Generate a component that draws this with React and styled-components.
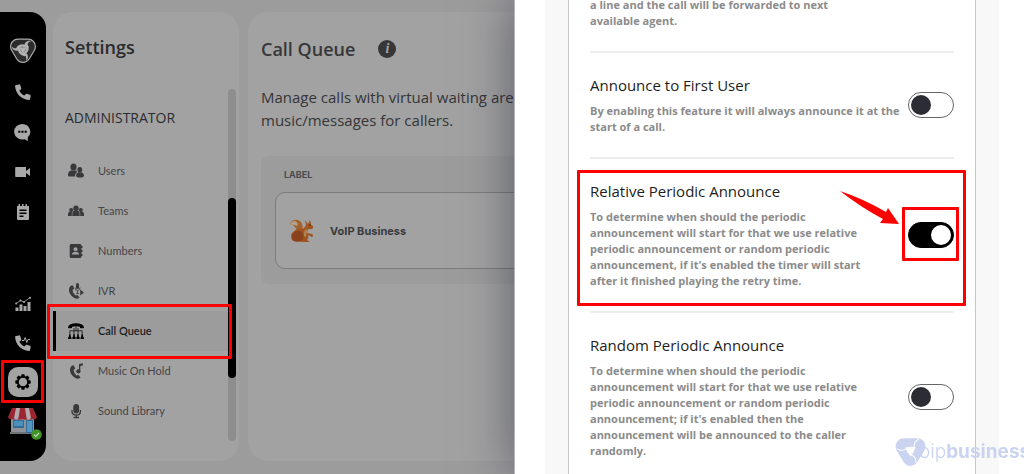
import React from 'react';
import styled, { createGlobalStyle, css } from 'styled-components';

const GlobalStyle = createGlobalStyle`
  *, *::before, *::after { box-sizing: border-box; }
  body {
    margin: 0;
    background: #9c9c9c;
    color: #2b2b2e;
    font-family: "Open Sans", "Noto Sans", sans-serif;
    overflow: hidden;
  }
  button { font: inherit; color: inherit; padding: 0; border: 0; background: none; cursor: pointer; }
  h1, h2, h3, p, ul { margin: 0; padding: 0; }
  ul { list-style: none; }
`;

const Page = styled.div`
  display: flex;
  gap: 7px;
  height: 100vh;
  padding: 12px 0 13px;
`;

const Rail = styled.nav`
  flex: none;
  width: 46px;
  display: flex;
  flex-direction: column;
  justify-content: space-between;
  padding: 18px 0 21px;
  background: #000;
  border-radius: 0 16px 16px 0;
`;

const RailGroup = styled.div`
  display: flex;
  flex-direction: column;
`;

const RailItem = styled.button`
  position: relative;
  display: flex;
  align-items: center;
  justify-content: center;
  width: 45px;
  height: ${(p) => p.$height}px;
  color: #a9a9a9;
  svg { display: block; }
`;

const GearTile = styled.span`
  display: flex;
  align-items: center;
  justify-content: center;
  width: 30px;
  height: 30px;
  border-radius: 10px;
  background: #a3a3a3;
  color: #000;
`;

const Callout = styled.span`
  position: absolute;
  inset: ${(p) => p.$inset};
  border: 3px solid #fe0000;
  border-radius: 1px;
  pointer-events: none;
  z-index: 2;
`;

const StatusBadge = styled.span`
  position: absolute;
  right: 3px;
  bottom: 0;
  width: 11px;
  height: 11px;
`;

const Panel = styled.section`
  background: #a2a2a2;
  border-radius: 20px;
`;

const SettingsPanel = styled(Panel)`
  flex: none;
  width: 186px;
  display: flex;
  flex-direction: column;
  padding: 23px 3px 20px 0;
`;

const PanelTitle = styled.h1`
  font-size: 18px;
  line-height: 24px;
  font-weight: 600;
`;

const SettingsTitle = styled(PanelTitle)`
  padding-left: 12px;
`;

const ScrollArea = styled.div`
  flex: 1;
  display: flex;
  margin-top: 30px;
`;

const MenuColumn = styled.div`
  flex: 1;
`;

const GroupTitle = styled.h2`
  padding: 19px 0 23px 12px;
  font-size: 14px;
  line-height: 20px;
  font-weight: 400;
`;

const MenuItem = styled.li`
  position: relative;
`;

const MenuButton = styled.button`
  display: flex;
  align-items: center;
  gap: 14px;
  width: 100%;
  height: 40px;
  padding-left: ${(p) => (p.$active ? 12 : 15)}px;
  font-family: Lato, "Open Sans", sans-serif;
  font-size: 11px;
  line-height: 16px;
  text-align: left;
  color: #444447;
  svg { flex: none; display: block; color: #39393b; }
  ${(p) => p.$active && css`
    background: #9c9c9c;
    border-left: 3px solid #000;
    color: #1c1c1f;
    font-weight: 600;
    svg { color: #000; }
  `}
`;

const ScrollTrack = styled.div`
  flex: none;
  width: 8px;
  padding-top: 109px;
  border-radius: 4px;
  background: #8e8e8e;
`;

const ScrollThumb = styled.div`
  height: 180px;
  border-radius: 4px;
  background: #000;
`;

const Content = styled(Panel)`
  flex: 1;
  min-width: 0;
  margin-left: 2px;
  padding: 25px 13px 0;
  border-radius: 20px 0 0 20px;
  white-space: nowrap;
`;

const ContentHead = styled.header`
  display: flex;
  align-items: center;
  gap: 23px;
  color: #37373a;
`;

const InfoButton = styled.button`
  width: 18px;
  height: 18px;
  border-radius: 50%;
  background: #37373a;
  color: #a2a2a2;
  font: italic 700 14px/18px "Liberation Serif", serif;
  text-align: center;
`;

const Intro = styled.p`
  margin-top: 25px;
  font-size: 15px;
  line-height: 23px;
  color: #353538;
`;

const QueueCard = styled.div`
  margin-top: 24px;
  padding: 10px 14px 15px;
  border-radius: 8px;
  background: #9c9c9c;
`;

const ColumnLabel = styled.div`
  padding-left: 9px;
  font: 700 9px/18px Inter, sans-serif;
  color: #4b4b4e;
`;

const QueueRow = styled.div`
  display: flex;
  align-items: center;
  gap: 16px;
  height: 77px;
  margin-top: 8px;
  padding-left: 13px;
  border: 1px solid #7c7c7e;
  border-radius: 10px;
  background: #a2a2a2;
  font: 700 11px/16px Inter, sans-serif;
  color: #3a3a3d;
`;

const Drawer = styled.aside`
  position: fixed;
  inset: 0 0 0 auto;
  width: calc(50% - 2px);
  overflow: hidden;
  padding: 0 25px 0 30px;
  background: #fff;
  border-left: 1px solid #b4b4b8;
  box-shadow: 0 0 48px rgba(20, 22, 50, 0.5);
`;

const DrawerBody = styled.div`
  height: 100%;
  padding: 0 23px;
  background: #f8f8f8;
`;

const OptionCard = styled.div`
  display: flow-root;
  height: 100%;
  padding: 0 21px;
  background: #fff;
  border: solid #c6c6c6;
  border-width: 0 1px;
`;

const Option = styled.div`
  position: relative;
  display: flex;
  align-items: center;
  justify-content: space-between;
  padding: 22px 0;
  border-bottom: 2px solid #ededed;
`;

const ScrolledOption = styled(Option)`
  margin-top: -3px;
  padding-top: 0;
`;

const OptionText = styled.div`
  flex: 1;
  min-width: 0;
`;

const OptionTitle = styled.label`
  display: block;
  margin-bottom: 8px;
  font-size: 15px;
  line-height: 20px;
  color: #1e1e20;
`;

const OptionNote = styled.p`
  font-size: 11px;
  line-height: 16px;
  font-weight: 700;
  color: #8b8b8b;
  white-space: pre;
`;

const SwitchWrap = styled.span`
  position: relative;
  flex: none;
  display: flex;
`;

const Switch = styled.input`
  appearance: none;
  display: flex;
  align-items: center;
  width: 46px;
  height: 26px;
  margin: 0;
  padding: 0 2px;
  border: 1px solid #66666a;
  border-radius: 13px;
  background: #fff;
  cursor: pointer;
  &::before {
    content: "";
    width: 20px;
    height: 20px;
    border-radius: 50%;
    background: #2c2c35;
  }
  &:checked {
    justify-content: flex-end;
    background: #000;
    border-color: #000;
  }
  &:checked::before { background: #fff; }
`;

const Arrow = styled.svg`
  position: absolute;
  right: 54px;
  top: 32px;
`;

const Watermark = styled.div`
  position: absolute;
  left: 380px;
  bottom: 7px;
  display: flex;
  align-items: center;
  color: #cad4f0;
  white-space: nowrap;
  pointer-events: none;
`;

const WatermarkText = styled.span`
  margin-left: -7px;
  font: 300 19px/24px Inter, sans-serif;
  strong { font-weight: 700; }
`;

const Glyph = ({ w = 16, h = w, box = '0 0 16 16', children }) => (
  <svg width={w} height={h} viewBox={box} fill="currentColor" aria-hidden="true">{children}</svg>
);

const HANDSET = 'M3.8.4 1 .9C.3 1 0 1.500.1 2.200.8 9.800 6.200 15.200 13.800 15.900 14.500 16 15 15.700 15.100 15L15.700 12.200C15.800 11.500 15.500 11.100 14.900 10.800L11.900 9.800C11.400 9.600 10.900 9.800 10.600 10.200L9.300 11.600C7.100 10.500 5.500 8.900 4.400 6.700L5.800 5.400C6.200 5.100 6.400 4.600 6.200 4.100L5.200 1.100C5 .5 4.500.2 3.800.4Z';
const TURNS = [0, 120, 240];

const Brand = () => (
  <Glyph w={28} h={28} box="0 0 28 27">
    <path d="M9 9H19L14 17.500Z" fill="#a9a9a9" stroke="#a9a9a9" strokeWidth="16" strokeLinejoin="round" />
    <path d="M9 9H19L14 17.500Z" fill="#2c2c2c" stroke="#2c2c2c" strokeWidth="13.600" strokeLinejoin="round" />
    <path d="M10 9.700h8L14 16.800Z" fill="#b2b2b2" />
    {TURNS.map((a) => (
      <g key={a} transform={`rotate(${a} 14 12)`}>
        <path d="M19 12Q18 6.800 13 6.800 8.500 7.300 7 11 4.500 11 2.500 9 4 13.800 9 13.300 9.500 9.800 13 9.300 17 9.200 19 12Z" fill="#b2b2b2" />
      </g>
    ))}
  </Glyph>
);

const Phone = () => <Glyph><path d={HANDSET} /></Glyph>;

const Chat = () => (
  <Glyph w={17}>
    <path fillRule="evenodd" d="M8 0a7.700 7.300 0 1 0 2 14.300L13 16v-3.500A7.600 7.300 0 0 0 8 0ZM4 6.300h2v2H4Zm3 0h2v2H7Zm3 0h2v2h-2Z" />
  </Glyph>
);

const Video = () => <Glyph><path d="M1 3h10v4l4-3v8l-4-3v4H1q-.8 0-.8-.8V3.800Q.2 3 1 3Z" /></Glyph>;

const Notes = () => (
  <Glyph>
    <path fillRule="evenodd" d="M2 2h1.500V0H5v2h2V0h1.500v2h2V0H12v2h2v13q0 1-1 1H3q-1 0-1-1ZM4.500 5.500V7h7V5.500Zm0 3V10h7V8.500Zm0 3V13h4v-1.500Z" />
  </Glyph>
);

const Chart = () => (
  <Glyph>
    <path d="M.5 11.500h3V15h-3Zm4-3h3V15h-3Zm4 1.500h3v5h-3Zm4-4h3v9h-3Z" />
    <path d="m1 7.500 4.500-3L9 6l6-4.500" fill="none" stroke="currentColor" strokeWidth=".8" />
    <circle cx="1.200" cy="7.500" r="1" /><circle cx="5.500" cy="4.500" r="1" /><circle cx="9" cy="6" r="1" /><circle cx="15" cy="1.800" r="1" />
  </Glyph>
);

const PhonePulse = () => (
  <Glyph>
    <path d={HANDSET} />
    <path d="M7 5.500h2l1.200-3 1.600 5L13 4.500h2" fill="none" stroke="currentColor" />
  </Glyph>
);

const Gear = () => (
  <Glyph w={16}>
    {[0, 45, 90, 135, 180, 225, 270, 315].map((a) => (
      <rect key={a} x="6.300" y="0.300" width="3.400" height="3" rx=".7" transform={`rotate(${a} 8 8)`} />
    ))}
    <circle cx="8" cy="8" r="5.200" fill="none" stroke="currentColor" strokeWidth="1.900" />
  </Glyph>
);

const Store = () => (
  <Glyph w={29} h={26} box="0 0 29 26">
    <path d="M3 8h23v17H3Z" fill="#8f9296" />
    <path d="M2 24h25v2H2Z" fill="#6d7478" />
    <path d="M5 12h11v8H5Z" fill="#356c94" /><path d="M6 13h9v5H6Z" fill="#4c91bd" />
    <path d="M18 12h7v13h-7Z" fill="#326d98" /><path d="M19 13h5v11h-5Z" fill="#5295bd" />
    <path d="M4 0h21l4 9q-1 3-4 2-3 1-5 0-3 1-5.500 0-3 1-5.500 0-2 1-5 0-3 1-4-2Z" fill="#9b2532" />
    <path d="m8 0-2 10q2 3 4.500 0L12 0Zm9 0 1.500 10q2 3 4.500 0L21 0Z" fill="#b4aaad" />
  </Glyph>
);

const Check = () => (
  <Glyph w={11} box="0 0 11 11">
    <circle cx="5.500" cy="5.500" r="5.300" fill="#3f9425" />
    <path d="m3 5.600 1.800 1.800L8 4" fill="none" stroke="#c6d9c0" strokeWidth="1.200" />
  </Glyph>
);

const Users = () => (
  <Glyph>
    <ellipse cx="5.500" cy="4" rx="3.100" ry="3.600" /><path d="M0 12q0-4 3-4.500h5q1 .5 1 2Q7 10 7 13.500H1Q0 13.500 0 12Z" />
    <ellipse cx="11.800" cy="6.800" rx="2.400" ry="2.700" /><path d="M8 12.500Q8 10 10.500 9.300h2.800Q16 10 16 12.500q0 2-4 2t-4-2Z" />
  </Glyph>
);

const Teams = () => (
  <Glyph>
    <circle cx="8" cy="5.300" r="2.700" /><circle cx="3.200" cy="7" r="2" /><circle cx="12.800" cy="7" r="2" />
    <path d="M4.300 13V11q0-3.500 2.700-3.500h2q2.700 0 2.700 3.500v2ZM0 13v-2q0-2.500 2-2.500h2Q3.800 10 3.800 13Zm16 0v-2q0-2.500-2-2.500h-2q.2 1.500.2 4.500Z" />
  </Glyph>
);

const Book = () => (
  <Glyph>
    <path fillRule="evenodd" d="M3 1h9q1.500 0 1.500 1.500v11Q13.500 15 12 15H3q-1.300 0-1.300-1.500v-11Q1.700 1 3 1Zm4.500 3.200a2 2 0 1 0 .1 0ZM4 11.500h7q0-2.600-2.500-2.600h-2Q4 8.900 4 11.500Z" />
    <path d="M13 3h1.500v2H13Zm0 4h1.500v2H13Zm0 4h1.500v2H13Z" />
  </Glyph>
);

const RoundHandset = () => (
  <path d="M3 2.500C0 5 .5 10 4 13.200 6.500 15.800 10 16.500 11.500 14.500L9.600 11.900 7.500 12.500Q4.800 10.300 4.500 7.300L6 5.500 5 2.500Z" />
);

const Ivr = () => (
  <Glyph>
    <RoundHandset />
    <rect x="8" y="0" width="3" height="6" rx="1.500" />
    <path d="M7 4.500q0 3 2.500 3t2.500-3M9.500 7.500v3M8 10.500h3" fill="none" stroke="currentColor" strokeWidth=".8" />
    <path d="m12.200 6.500 3.800 3-3.800 3Z" />
  </Glyph>
);

const MusicHold = () => (
  <Glyph>
    <g transform="translate(1 0)"><RoundHandset /></g>
    <path d="M11 8V1l3.800-.8v2.300l-2.500.6V8.500" /><circle cx="10.400" cy="8.300" r="2.100" />
  </Glyph>
);

const Mic = () => (
  <Glyph>
    <rect x="5.300" y="1" width="5.800" height="9.500" rx="2.900" />
    <path d="M4 7v1.500q0 3.700 4.200 3.700t4.200-3.700V7M8.200 12v2.500M5.500 14.500h5.500" fill="none" stroke="currentColor" strokeWidth="1.300" />
  </Glyph>
);

const QueueTree = () => (
  <Glyph>
    <path d="M0 4Q1 .2 8 .2T16 4q0 1.200-1 1.200h-2q-1.200 0-1.200-1.500Q8 2.700 4.200 3.700q0 1.500-1.200 1.500H1Q0 5.200 0 4Z" />
    <path d="M8 3v5M1.800 12V7.800h12.400V12M6 5v7M10 5v7" fill="none" stroke="currentColor" strokeWidth=".7" />
    {[1.8, 6, 10, 14.2].map((x) => (
      <path key={x} d={`M${x - 0.8} 11.500h1.600v2l.8 .8V16h-3.200v-1.700l.8-.8Z`} />
    ))}
  </Glyph>
);

const Squirrel = () => (
  <Glyph w={25} h={24} box="0 0 25 24">
    <path d="M3 2Q8-1 12 3q3 4 1 9L7 16Q9 11 6 8 4 5 1 6 1 3 3 2Z" fill="#a2622d" />
    <path d="M1 6Q2 2 6 2q4 2 2 5-3-2-7-1Z" fill="#b3a189" />
    <path d="M16 1l3 4 2-4q1 3 1 5 3 1 2 3-1 2-5 1l-1 4 5 1q2 2 0 3l-4-2q1 4-1 5l3 2h-7L4 22Q0 17 4 13q4-4 9-3 3-1 4-4Z" fill="#a0541f" />
    <path d="M4 14q4-4 9-1 3 4 0 8-4 3-8 1-4-4-1-8Z" fill="#8a421c" />
    <path d="M17 10q-3 3-2 7l2 1 1-7Z" fill="#b18352" />
    <circle cx="21" cy="6" r=".7" fill="#332016" />
  </Glyph>
);

const WatermarkLogo = () => (
  <Glyph w={31} h={30} box="0 0 28 27">
    <path d="M8 8.500H20L14 18.500Z" stroke="currentColor" strokeWidth="15" strokeLinejoin="round" />
    <path d="M9.500 9.400h9L14 17.200Z" fill="#fff" />
    {TURNS.map((a) => (
      <path key={a} d="M18.500 9.800Q13 8 9.500 10.800 6 13.500 1.500 10.500" fill="none" stroke="#fff" strokeWidth=".9" transform={`rotate(${a} 14 12)`} />
    ))}
  </Glyph>
);

const MENU = [
  { name: 'Users', icon: Users },
  { name: 'Teams', icon: Teams },
  { name: 'Numbers', icon: Book },
  { name: 'IVR', icon: Ivr },
  { name: 'Call Queue', icon: QueueTree, active: true },
  { name: 'Music On Hold', icon: MusicHold },
  { name: 'Sound Library', icon: Mic },
];

const RAIL_TOP = [
  { name: 'Phone', icon: Phone },
  { name: 'Chat', icon: Chat },
  { name: 'Video', icon: Video },
  { name: 'Notes', icon: Notes },
];

const RAIL_BOTTOM = [
  { name: 'Analytics', icon: Chart },
  { name: 'Call activity', icon: PhonePulse },
];

export default function App() {
  return (
    <>
      <GlobalStyle />
      <Page>
        <Rail>
          <RailGroup>
            <RailItem $height={42} aria-label="Home"><Brand /></RailItem>
            {RAIL_TOP.map(({ name, icon: Icon }) => (
              <RailItem key={name} $height={40} aria-label={name}><Icon /></RailItem>
            ))}
          </RailGroup>
          <RailGroup>
            {RAIL_BOTTOM.map(({ name, icon: Icon }) => (
              <RailItem key={name} $height={39} aria-label={name}><Icon /></RailItem>
            ))}
            <RailItem $height={39} aria-label="Settings">
              <GearTile><Gear /></GearTile>
              <Callout $inset="-2px 1px" />
            </RailItem>
            <RailItem $height={39} aria-label="Account">
              <Store />
              <StatusBadge><Check /></StatusBadge>
            </RailItem>
          </RailGroup>
        </Rail>

        <SettingsPanel>
          <SettingsTitle>Settings</SettingsTitle>
          <ScrollArea>
            <MenuColumn>
              <GroupTitle>ADMINISTRATOR</GroupTitle>
              <ul>
                {MENU.map(({ name, icon: Icon, active }) => (
                  <MenuItem key={name}>
                    <MenuButton $active={active}><Icon />{name}</MenuButton>
                    {active && <Callout $inset="-7px -4px -8px -6px" />}
                  </MenuItem>
                ))}
              </ul>
            </MenuColumn>
            <ScrollTrack><ScrollThumb /></ScrollTrack>
          </ScrollArea>
        </SettingsPanel>

        <Content>
          <ContentHead>
            <PanelTitle as="h2">Call Queue</PanelTitle>
            <InfoButton aria-label="About call queues">i</InfoButton>
          </ContentHead>
          <Intro>
            Manage calls with virtual waiting area<br />
            music/messages for callers.
          </Intro>
          <QueueCard>
            <ColumnLabel>LABEL</ColumnLabel>
            <QueueRow><Squirrel />VoIP Business</QueueRow>
          </QueueCard>
        </Content>
      </Page>

      <Drawer>
        <DrawerBody>
          <OptionCard>
            <ScrolledOption>
              <OptionNote>{'a line and the call will be forwarded to next\navailable agent.'}</OptionNote>
            </ScrolledOption>
            <Option>
              <OptionText>
                <OptionTitle htmlFor="first-user">Announce to First User</OptionTitle>
                <OptionNote>{'By enabling this feature it will always announce it at the\nstart of a call.'}</OptionNote>
              </OptionText>
              <SwitchWrap><Switch type="checkbox" role="switch" id="first-user" /></SwitchWrap>
            </Option>
            <Option>
              <OptionText>
                <OptionTitle htmlFor="relative">Relative Periodic Announce</OptionTitle>
                <OptionNote>{"To determine when should the periodic\nannouncement will start for that we use relative\nperiodic announcement or random periodic\nannouncement, if it's enabled the timer will start\nafter it finished playing the retry time."}</OptionNote>
              </OptionText>
              <SwitchWrap>
                <Switch type="checkbox" role="switch" id="relative" defaultChecked />
                <Callout $inset="-15px -5px -13px -6px" />
              </SwitchWrap>
              <Callout $inset="11px -12px 5px -13px" />
              <Arrow width="60" height="36" viewBox="0 0 60 36" fill="#fe0000" aria-hidden="true">
                <path d="M0 0Q24 8 46 21L48 17 59 33 40 32 43 28Q22 17 0 0Z" />
              </Arrow>
            </Option>
            <Option>
              <OptionText>
                <OptionTitle htmlFor="random">Random Periodic Announce</OptionTitle>
                <OptionNote>{"To determine when should the periodic\nannouncement will start for that we use relative\nperiodic announcement or random periodic\nannouncement; if it's enabled then the\nannouncement will be announced to the caller\nrandomly."}</OptionNote>
              </OptionText>
              <SwitchWrap><Switch type="checkbox" role="switch" id="random" /></SwitchWrap>
            </Option>
          </OptionCard>
        </DrawerBody>
        <Watermark>
          <WatermarkLogo />
          <WatermarkText>oip<strong>business</strong></WatermarkText>
        </Watermark>
      </Drawer>
    </>
  );
}
